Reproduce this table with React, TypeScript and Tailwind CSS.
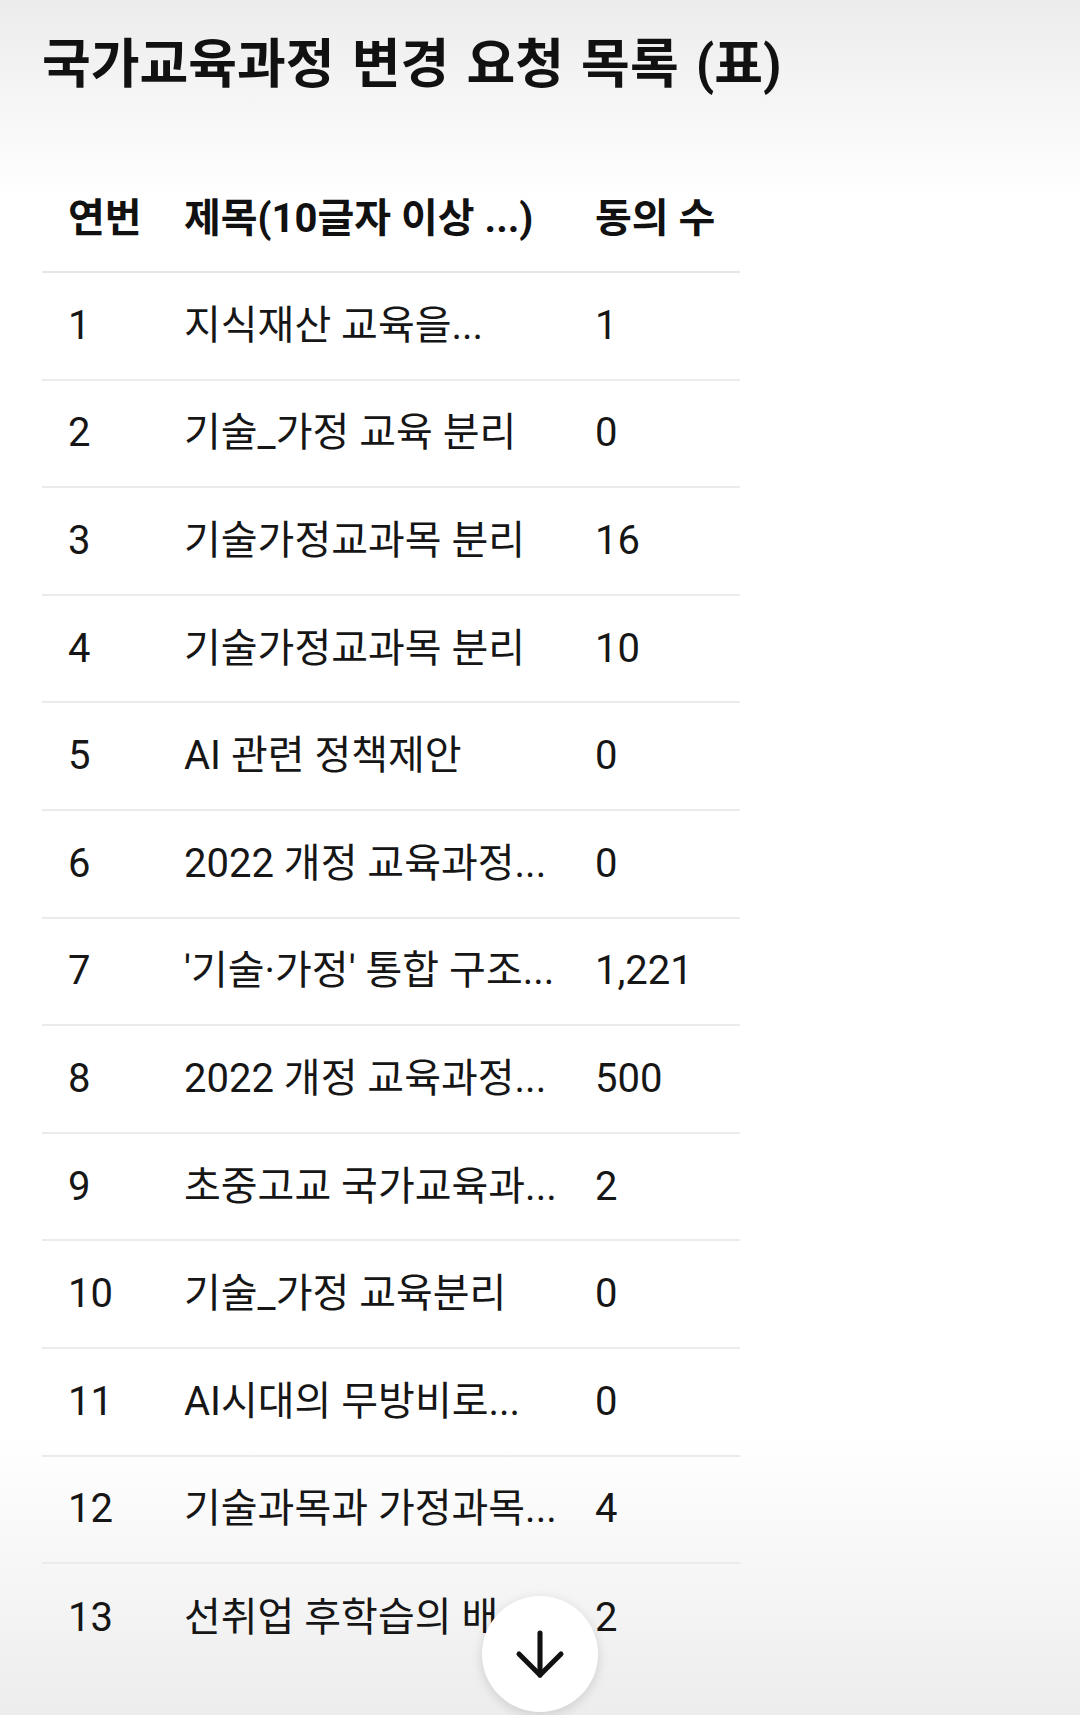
import { ArrowDown } from 'lucide-react';

const rows = [
    { no: '1', title: '지식재산 교육을...', agree: '1' },
    { no: '2', title: '기술_가정 교육 분리', agree: '0' },
    { no: '3', title: '기술가정교과목 분리', agree: '16' },
    { no: '4', title: '기술가정교과목 분리', agree: '10' },
    { no: '5', title: 'AI 관련 정책제안', agree: '0' },
    { no: '6', title: '2022 개정 교육과정...', agree: '0' },
    { no: '7', title: "'기술·가정' 통합 구조...", agree: '1,221' },
    { no: '8', title: '2022 개정 교육과정...', agree: '500' },
    { no: '9', title: '초중고교 국가교육과...', agree: '2' },
    { no: '10', title: '기술_가정 교육분리', agree: '0' },
    { no: '11', title: 'AI시대의 무방비로...', agree: '0' },
    { no: '12', title: '기술과목과 가정과목...', agree: '4' },
    { no: '13', title: '선취업 후학습의 배...', agree: '2' },
];

export default function App() {
    return (
        <div
            className="relative h-[1715px] w-[1080px] overflow-hidden bg-white text-[#161616]"
            style={{ fontFamily: "Roboto, 'Noto Sans CJK KR', sans-serif" }}
        >
            {/* soft gray shade at the top and bottom, behind the content */}
            <div className="pointer-events-none absolute inset-x-0 top-0 h-[200px] bg-gradient-to-b from-[#ececec] to-white/0" />
            <div className="pointer-events-none absolute inset-x-0 bottom-0 h-[280px] bg-gradient-to-b from-white/0 to-[#ededed]" />

            <div className="relative px-[42px] pt-[39px]">
                <h1 className="text-[53px] font-bold leading-none text-[#111] [word-spacing:4px]">
                    국가교육과정 변경 요청 목록 (표)
                </h1>

                <div className="mt-[75px] w-[698px]">
                    <div className="grid h-[106px] grid-cols-[116px_411px_171px] items-center border-b-2 border-[#e6e6e6] text-[40px] font-bold leading-none text-[#111]">
                        <div className="pl-[26px]">연번</div>
                        <div className="pl-[26px] whitespace-nowrap">제목(10글자 이상 ...)</div>
                        <div className="pl-[26px] whitespace-nowrap">동의 수</div>
                    </div>

                    {rows.map((row) => (
                        <div
                            key={row.no}
                            className="grid h-[107.6px] grid-cols-[116px_411px_171px] items-center border-b-2 border-[#ebebeb] text-[40px] leading-none last:border-b-0"
                        >
                            <div className="pl-[26px]">{row.no}</div>
                            <div className="pl-[26px] whitespace-nowrap">{row.title}</div>
                            <div className="pl-[26px]">{row.agree}</div>
                        </div>
                    ))}
                </div>
            </div>

            <button className="absolute left-1/2 top-[1596px] flex h-[116px] w-[116px] -translate-x-1/2 items-center justify-center rounded-full bg-white shadow-[0_3px_12px_rgba(0,0,0,0.14)]">
                <ArrowDown size={72} strokeWidth={1.7} color="#111" />
            </button>
        </div>
    );
}
